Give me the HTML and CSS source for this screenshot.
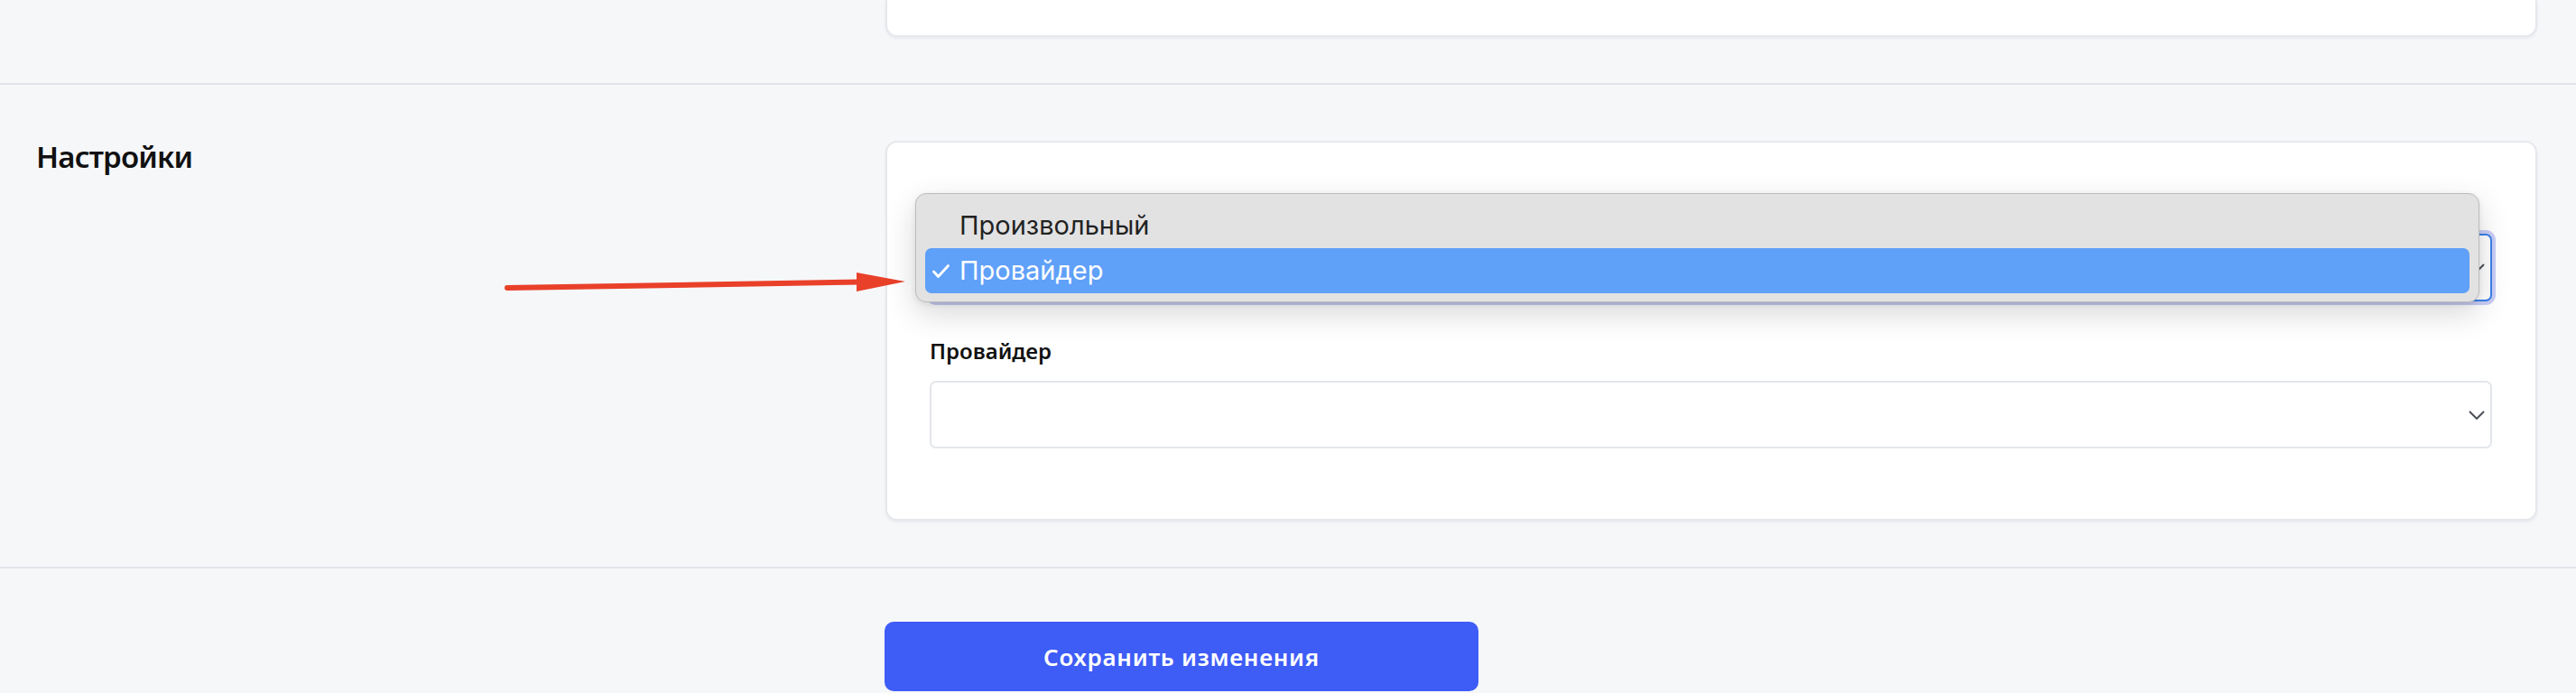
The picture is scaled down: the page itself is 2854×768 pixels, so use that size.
FILE: index.html
```html
<!DOCTYPE html>
<html lang="ru">
  <head>
    <meta charset="utf-8" />
    <title>Настройки</title>
    <link rel="stylesheet" href="styles.css">
  </head>
  <body>
    <!-- previous block, scrolled mostly out of view -->
    <section class="section section-first">
      <div class="section-aside"></div>
      <div class="card card-cut"></div>
    </section>

    <section class="section">
      <div class="section-aside">
        <h2 class="section-title">Настройки</h2>
      </div>

      <div class="card card-form">
        <div class="field field-open">
          <label class="field-label" for="mode">Тип</label>
          <div class="select-wrap">
            <select id="mode" class="select select-focus">
              <option>Произвольный</option>
              <option selected>Провайдер</option>
            </select>
            <svg class="chevron" viewBox="0 0 18 10" width="18" height="10">
              <polyline points="1,1 9,9 17,1" fill="none" stroke="#4b5058" stroke-width="2" />
            </svg>
          </div>

          <!-- native popup menu, open -->
          <div class="popup">
            <div class="popup-item">Произвольный</div>
            <div class="popup-item popup-item-active">
              <svg class="popup-check" viewBox="0 0 19 15" width="19" height="15">
                <polyline points="1.5,8 6.5,13.5 17.5,1.5" fill="none" stroke="#fff" stroke-width="2.8" stroke-linecap="round" stroke-linejoin="round" />
              </svg>
              Провайдер
            </div>
          </div>
        </div>

        <div class="field">
          <label class="field-label" for="provider">Провайдер</label>
          <div class="select-wrap">
            <select id="provider" class="select">
              <option></option>
            </select>
            <svg class="chevron" viewBox="0 0 18 10" width="18" height="10">
              <polyline points="1,1 9,9 17,1" fill="none" stroke="#4b5058" stroke-width="2" />
            </svg>
          </div>
        </div>
      </div>
    </section>

    <section class="section section-last">
      <div class="section-aside"></div>
      <div>
        <button class="btn-save">Сохранить изменения</button>
      </div>
    </section>

    <!-- annotation arrow -->
    <svg class="pointer-arrow" viewBox="0 0 455 36" width="455" height="36">
      <line x1="7" y1="24" x2="398" y2="17.6" stroke="#e9402a" stroke-width="6" stroke-linecap="round" />
      <polygon points="394,7 448,17 394,28" fill="#e9402a" />
    </svg>
  </body>
</html>
```

FILE: styles.css
```css
body {
  margin: 0;
  background-color: #f6f7f9;
  font-family: "Noto Sans", "Open Sans", sans-serif;
  color: #111;
  position: relative;
}

.section {
  display: grid;
  grid-template-columns: 941px 1fr;
  padding: 62px 43px 51px 40px;
  border-bottom: 2px solid #e2e4ea;
}

.section-first {
  padding-top: 0;
}

.section-last {
  padding-top: 59px;
  padding-bottom: 0;
  border-bottom: none;
}

.section-title {
  margin: 1px 0 0;
  font-size: 33px;
  line-height: 34px;
  font-weight: 600;
  letter-spacing: -0.8px;
  color: #111;
}

.card {
  background-color: #fff;
  border: 2px solid #e6e8ed;
  border-radius: 13px;
  box-shadow: 0 2px 3px rgba(20, 30, 60, 0.06);
}

.card-cut {
  height: 39px;
  border-top: none;
  border-top-left-radius: 0;
  border-top-right-radius: 0;
}

.card-form {
  padding: 51px 48px 78px 47px;
}

.field {
  position: relative;
}

.field + .field {
  margin-top: 37px;
}

.field-label {
  display: block;
  font-size: 24px;
  line-height: 36px;
  font-weight: 600;
  margin-bottom: 15px;
}

.field-open .field-label {
  margin-bottom: 14px;
}

.select-wrap {
  position: relative;
}

.select {
  display: block;
  width: 100%;
  height: 75px;
  box-sizing: border-box;
  border: 2px solid #e3e6eb;
  border-radius: 7px;
  background-color: #fff;
  appearance: none;
  -webkit-appearance: none;
  font-family: "Noto Sans", sans-serif;
  font-size: 24px;
  color: transparent;
  padding: 0 20px;
}

.select-focus {
  border-color: #3a82ec;
  box-shadow: 0 0 0 4px #c9cdf6;
  outline: none;
}

.chevron {
  position: absolute;
  right: 8px;
  top: 33px;
}

.popup {
  position: absolute;
  left: -16px;
  right: 14px;
  top: 5px;
  z-index: 2;
  background-color: #e2e2e2;
  border: 1px solid #bcbcbc;
  border-radius: 12px;
  padding: 10px 10px 9px;
  box-shadow: 0 12px 34px rgba(0, 0, 0, 0.16), 0 2px 6px rgba(0, 0, 0, 0.08);
  font-family: "Inter", "Liberation Sans", sans-serif;
  font-size: 29px;
  line-height: 50px;
  color: #222;
}

.popup-item {
  position: relative;
  height: 50px;
  padding-left: 38px;
  border-radius: 7px;
}

.popup-item-active {
  background-color: #5fa0f8;
  color: #fff;
}

.popup-check {
  position: absolute;
  left: 8px;
  top: 18px;
}

.btn-save {
  width: 658px;
  height: 77px;
  margin-left: -1px;
  border: none;
  border-radius: 10px;
  background-color: #3e5cf6;
  color: #fff;
  font-family: "Noto Sans", sans-serif;
  font-size: 26px;
  font-weight: 600;
  letter-spacing: 0.7px;
  cursor: pointer;
}

.pointer-arrow {
  position: absolute;
  left: 555px;
  top: 295px;
}
```
